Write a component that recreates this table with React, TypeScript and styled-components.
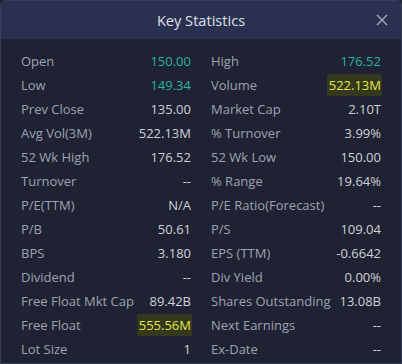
import styled, { createGlobalStyle } from 'styled-components';

const GlobalStyle = createGlobalStyle`
  html, body {
    margin: 0;
    padding: 0;
    background: #1c1f2e;
  }
  body {
    font-family: 'Open Sans', 'Noto Sans', sans-serif;
  }
`;

const Modal = styled.div`
  width: 402px;
  height: 364px;
  box-sizing: border-box;
  border: 1px solid #3a3f58;
  border-radius: 5px 5px 0 0;
  background: #1f2232;
  overflow: hidden;
  display: flex;
  flex-direction: column;
`;

const Header = styled.div`
  height: 38px;
  flex: none;
  background: #2a3050;
  display: flex;
  align-items: center;
  justify-content: center;
  position: relative;
`;

const Title = styled.span`
  color: #dfe1ea;
  font-size: 14.6px;
`;

const Close = styled.button`
  position: absolute;
  right: 12px;
  top: 12px;
  width: 14px;
  height: 14px;
  padding: 0;
  border: none;
  background: none;
  display: flex;
  align-items: center;
  justify-content: center;
  cursor: pointer;
`;

const Grid = styled.div`
  display: grid;
  grid-template-columns: 170px 170px;
  column-gap: 20px;
  padding: 10px 0 0 20px;
`;

const Row = styled.div`
  height: 24px;
  display: flex;
  align-items: center;
  justify-content: space-between;
  font-size: 13px;
`;

const Label = styled.span`
  color: #9ea2b2;
`;

const Value = styled.span<{ $tone?: 'green' | 'yellow' }>`
  color: ${(p) =>
    p.$tone === 'green' ? '#2bb3a0' : p.$tone === 'yellow' ? '#e4e64a' : '#cfd1d9'};
  background: ${(p) => (p.$tone === 'yellow' ? '#34381d' : 'transparent')};
  padding: ${(p) => (p.$tone === 'yellow' ? '2px 1px 2px 2px' : '0')};
  margin-right: ${(p) => (p.$tone === 'yellow' ? '-1px' : '0')};
  border-radius: 2px;
`;

type Stat = [string, string, ('green' | 'yellow')?];

const stats: Stat[] = [
  ['Open', '150.00', 'green'],
  ['High', '176.52', 'green'],
  ['Low', '149.34', 'green'],
  ['Volume', '522.13M', 'yellow'],
  ['Prev Close', '135.00'],
  ['Market Cap', '2.10T'],
  ['Avg Vol(3M)', '522.13M'],
  ['% Turnover', '3.99%'],
  ['52 Wk High', '176.52'],
  ['52 Wk Low', '150.00'],
  ['Turnover', '--'],
  ['% Range', '19.64%'],
  ['P/E(TTM)', 'N/A'],
  ['P/E Ratio(Forecast)', '--'],
  ['P/B', '50.61'],
  ['P/S', '109.04'],
  ['BPS', '3.180'],
  ['EPS (TTM)', '-0.6642'],
  ['Dividend', '--'],
  ['Div Yield', '0.00%'],
  ['Free Float Mkt Cap', '89.42B'],
  ['Shares Outstanding', '13.08B'],
  ['Free Float', '555.56M', 'yellow'],
  ['Next Earnings', '--'],
  ['Lot Size', '1'],
  ['Ex-Date', '--'],
];

export default function App() {
  return (
    <>
      <GlobalStyle />
      <Modal>
        <Header>
          <Title>Key Statistics</Title>
          <Close aria-label='close'>
            <svg width='12' height='12' viewBox='0 0 12 12'>
              <path d='M1 1L11 11M11 1L1 11' stroke='#a9adbd' strokeWidth='1.3' />
            </svg>
          </Close>
        </Header>
        <Grid>
          {stats.map(([label, value, tone]) => (
            <Row key={label}>
              <Label>{label}</Label>
              <Value $tone={tone}>{value}</Value>
            </Row>
          ))}
        </Grid>
      </Modal>
    </>
  );
}
